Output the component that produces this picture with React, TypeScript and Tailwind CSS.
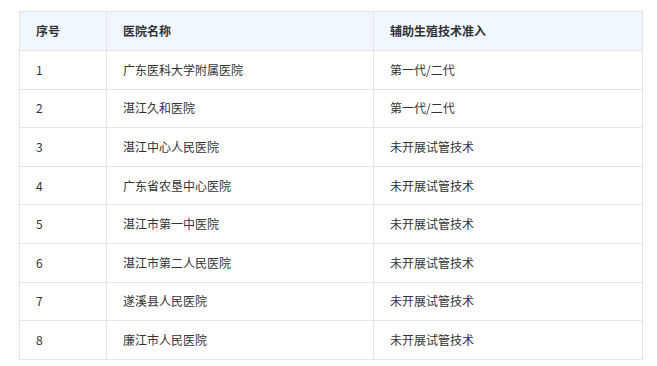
import React from 'react';

const rows = [
  ['1', '广东医科大学附属医院', '第一代/二代'],
  ['2', '湛江久和医院', '第一代/二代'],
  ['3', '湛江中心人民医院', '未开展试管技术'],
  ['4', '广东省农垦中心医院', '未开展试管技术'],
  ['5', '湛江市第一中医院', '未开展试管技术'],
  ['6', '湛江市第二人民医院', '未开展试管技术'],
  ['7', '遂溪县人民医院', '未开展试管技术'],
  ['8', '廉江市人民医院', '未开展试管技术'],
];

export default function App() {
  return (
    <div
      className="min-h-screen bg-white pl-[19px] pt-[11px] text-[12px] text-[#333]"
      style={{ fontFamily: '"Microsoft YaHei", "Noto Sans CJK SC", "Liberation Sans", sans-serif' }}
    >
      <table className="w-[624px] border-collapse border border-[#e5e5e5] table-fixed">
        <colgroup>
          <col className="w-[87px]" />
          <col className="w-[267px]" />
          <col />
        </colgroup>
        <thead>
          <tr className="h-[39px] bg-[#f0f7ff]">
            <th className="border border-[#e5e5e5] pl-4 text-left font-bold">序号</th>
            <th className="border border-[#e5e5e5] pl-4 text-left font-bold">医院名称</th>
            <th className="border border-[#e5e5e5] pl-4 text-left font-bold">辅助生殖技术准入</th>
          </tr>
        </thead>
        <tbody>
          {rows.map((r) => (
            <tr key={r[0]} className="h-[38.6px]">
              <td className="border border-[#e5e5e5] pl-4">{r[0]}</td>
              <td className="border border-[#e5e5e5] pl-4">{r[1]}</td>
              <td className="border border-[#e5e5e5] pl-4">{r[2]}</td>
            </tr>
          ))}
        </tbody>
      </table>
    </div>
  );
}
